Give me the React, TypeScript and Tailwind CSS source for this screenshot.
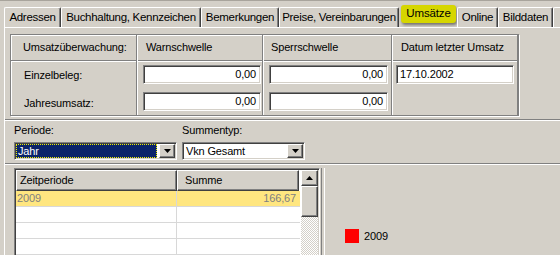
import React from 'react';

const sunken =
  'border border-t-[#808080] border-l-[#808080] border-b-white border-r-white shadow-[inset_1px_1px_0_#404040,inset_-1px_-1px_0_#d4d0c8]';
const raised =
  'bg-[#d4d0c8] border border-t-white border-l-white border-b-[#404040] border-r-[#404040] shadow-[inset_-1px_-1px_0_#808080]';

const tabs = [
  { label: 'Adressen', w: 'w-[57px]' },
  { label: 'Buchhaltung, Kennzeichen', w: 'w-[140px]' },
  { label: 'Bemerkungen', w: 'w-[78px]' },
  { label: 'Preise, Vereinbarungen', w: 'w-[120px]' },
  { label: 'Umsätze', w: 'w-[58px]', active: true },
  { label: 'Online', w: 'w-[41px]' },
  { label: 'Bilddaten', w: 'w-[55px]' },
  { label: '', w: 'w-[20px]' },
];

const Arrow: React.FC<{ up?: boolean }> = ({ up }) => (
  <svg width="7" height="4" viewBox="0 0 7 4" className={up ? 'rotate-180' : ''}>
    <path d="M0 0h7L3.5 4z" fill="#000" />
  </svg>
);

const Combo: React.FC<{ text: string; w: string; focused?: boolean }> = ({ text, w, focused }) => (
  <div className={`${w} h-[18px] flex bg-white ${sunken} p-[1px]`}>
    <div
      className={`flex-1 flex items-center pl-[2px] ${
        focused ? 'bg-[#0a246a] text-white outline-1 outline-dotted outline-[#f0f000] -outline-offset-1' : ''
      }`}
    >
      {text}
    </div>
    <div className={`w-[16px] ml-[2px] flex items-center justify-center ${raised}`}>
      <Arrow />
    </div>
  </div>
);

const NumInput: React.FC<{ value: string; w: string; left?: boolean }> = ({ value, w, left }) => (
  <div className={`${w} h-[19px] bg-white ${sunken} flex items-center ${left ? 'pl-[3px]' : 'justify-end pr-[4px]'}`}>
    {value}
  </div>
);

export default function App() {
  return (
    <div className="w-[560px] h-[255px] overflow-hidden bg-[#d4d0c8] text-[11px] text-black font-['Liberation_Sans',Arial,sans-serif] tracking-[-0.15px] leading-none whitespace-nowrap">
      <div className="h-[1px] bg-[#a8a49c]" />
      {/* tab row */}
      <div className="flex items-end h-[26px] pl-[4px]">
        {tabs.map((t) =>
          t.active ? (
            <div key={t.label} className={`${t.w} shrink-0 h-[26px] flex pt-[4px] pl-[2px] pr-[1px]`}>
              <div className="flex-1 h-[18px] rounded-[3px] bg-[#d6d600] shadow-[1px_2px_3px_rgba(0,0,0,0.45)] flex items-center justify-center text-[11.5px]">
                {t.label}
              </div>
            </div>
          ) : (
            <div
              key={t.label || 'more'}
              className={`${t.w} h-[20px] shrink-0 border-t border-l border-t-white border-l-white border-r border-r-[#404040] shadow-[inset_-1px_0_0_#808080] rounded-tl-[2px] rounded-tr-[2px] flex items-center justify-center text-[11.5px] tracking-[-0.3px]`}
            >
              {t.label}
            </div>
          )
        )}
      </div>

      {/* tab page */}
      <div className="ml-[4px] border-t border-l border-white h-[228px]">
        {/* group box */}
        <div className="ml-[5px] mt-[6px] w-[509px] h-[82px] border border-[#808080] shadow-[inset_1px_1px_0_white,1px_1px_0_white] grid grid-cols-[126px_126px_129px_126px]">
          {[
            { head: 'Umsatzüberwachung:', pl: 'pl-[12px]' },
            { head: 'Warnschwelle', pl: 'pl-[8px]' },
            { head: 'Sperrschwelle', pl: 'pl-[7px]' },
            { head: 'Datum letzter Umsatz', pl: 'pl-[8px]' },
          ].map((c, i) => (
            <div
              key={c.head}
              className={`flex flex-col border-r border-r-[#808080] ${i > 0 ? 'border-l border-l-white' : ''}`}
            >
              <div className={`h-[26px] shrink-0 flex items-center ${c.pl} border-b border-b-[#808080] shadow-[0_1px_0_white]`}>
                {c.head}
              </div>
              {i === 0 && (
                <div className="flex flex-col pl-[13px] pt-[9px] gap-[17px]">
                  <span className="leading-[11px]">Einzelbeleg:</span>
                  <span className="leading-[11px]">Jahresumsatz:</span>
                </div>
              )}
              {i === 1 && (
                <div className="flex flex-col pl-[5px] pt-[4px] gap-[8px]">
                  <NumInput value="0,00" w="w-[118px]" />
                  <NumInput value="0,00" w="w-[118px]" />
                </div>
              )}
              {i === 2 && (
                <div className="flex flex-col pl-[5px] pt-[4px] gap-[8px]">
                  <NumInput value="0,00" w="w-[119px]" />
                  <NumInput value="0,00" w="w-[119px]" />
                </div>
              )}
              {i === 3 && (
                <div className="flex flex-col pl-[3px] pt-[4px]">
                  <NumInput value="17.10.2002" w="w-[118px]" left />
                </div>
              )}
            </div>
          ))}
        </div>

        {/* separator */}
        <div className="mt-[3px] h-[2px] border-t border-t-[#808080] border-b border-b-white" />

        {/* Periode / Summentyp */}
        <div className="flex pl-[9px] gap-[5px] pt-[3px]">
          <div className="flex flex-col gap-[6px]">
            <span className="h-[12px] flex items-center">Periode:</span>
            <Combo text="Jahr" w="w-[163px]" focused />
          </div>
          <div className="flex flex-col gap-[6px]">
            <span className="h-[12px] flex items-center">Summentyp:</span>
            <Combo text="Vkn Gesamt" w="w-[123px]" />
          </div>
        </div>

        <div className="mt-[3px] h-[2px] border-t border-t-[#808080] border-b border-b-white" />

        {/* bottom area */}
        <div className="flex pt-[3px]">
          <div className={`ml-[9px] w-[306px] h-[100px] bg-white ${sunken} p-[1px] flex`}>
            <div className="w-[285px] flex flex-col">
              <div className="flex h-[21px] shrink-0">
                <div className={`w-[161px] flex items-center pl-[3px] ${raised}`}>Zeitperiode</div>
                <div className={`w-[122px] flex items-center pl-[7px] ${raised}`}>Summe</div>
              </div>
              <div className="flex h-[16px] bg-[#ffe680] text-[#808080] border-b border-b-[#d8d8d8]">
                <div className="w-[161px] flex items-center pl-[1px] border-r border-r-[#d8d8d8]">2009</div>
                <div className="w-[122px] flex items-center justify-end pr-[3px]">166,67</div>
              </div>
              {[0, 1, 2].map((r) => (
                <div key={r} className="flex h-[16px] border-b border-b-[#d8d8d8]">
                  <div className="w-[161px] border-r border-r-[#d8d8d8]" />
                  <div className="w-[122px]" />
                </div>
              ))}
            </div>
            <div className="w-[17px] ml-[1px] flex flex-col bg-[repeating-conic-gradient(#d4d0c8_0_25%,#ffffff_0_50%)] bg-[length:2px_2px]">
              <div className={`h-[16px] flex items-center justify-center ${raised}`}>
                <Arrow up />
              </div>
              <div className={`h-[31px] ${raised}`} />
            </div>
          </div>
          <div className="ml-[1px] w-[4px] h-[100px] border-l border-l-[#808080] border-r border-r-white" />
          <div className="flex-1 relative">
            <div className="flex items-center gap-[5px] mt-[61px] ml-[20px]">
              <div className="w-[14px] h-[14px] bg-[#ff0000]" />
              <span className="text-[#000]">2009</span>
            </div>
          </div>
        </div>
      </div>
    </div>
  );
}
